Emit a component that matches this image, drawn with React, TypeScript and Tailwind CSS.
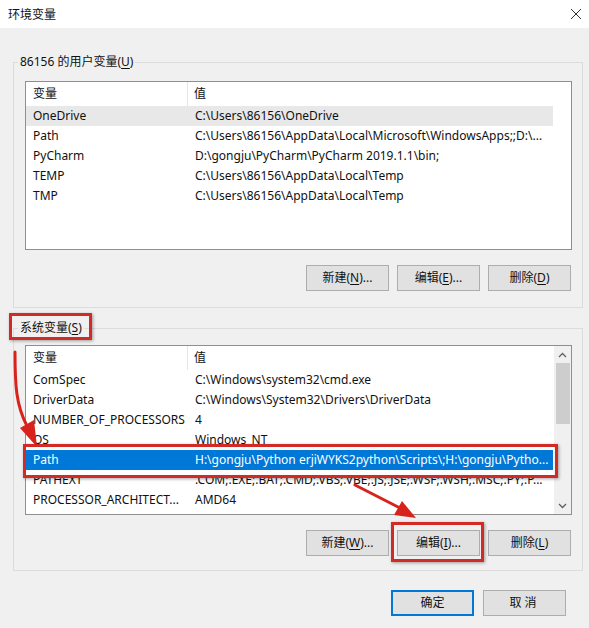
import React from "react";

type Row = { n: string; v: string; sel?: boolean; hover?: boolean };

const userRows: Row[] = [
  { n: "OneDrive", v: "C:\\Users\\86156\\OneDrive", hover: true },
  { n: "Path", v: "C:\\Users\\86156\\AppData\\Local\\Microsoft\\WindowsApps;;D:\\..." },
  { n: "PyCharm", v: "D:\\gongju\\PyCharm\\PyCharm 2019.1.1\\bin;" },
  { n: "TEMP", v: "C:\\Users\\86156\\AppData\\Local\\Temp" },
  { n: "TMP", v: "C:\\Users\\86156\\AppData\\Local\\Temp" },
];

const sysRows: Row[] = [
  { n: "ComSpec", v: "C:\\Windows\\system32\\cmd.exe" },
  { n: "DriverData", v: "C:\\Windows\\System32\\Drivers\\DriverData" },
  { n: "NUMBER_OF_PROCESSORS", v: "4" },
  { n: "OS", v: "Windows_NT" },
  { n: "Path", v: "H:\\gongju\\Python erjiWYKS2python\\Scripts\\;H:\\gongju\\Pytho...", sel: true },
  { n: "PATHEXT", v: ".COM;.EXE;.BAT;.CMD;.VBS;.VBE;.JS;.JSE;.WSF;.WSH;.MSC;.PY;.P..." },
  { n: "PROCESSOR_ARCHITECT...", v: "AMD64" },
];

function ListRows({ rows }: { rows: Row[] }) {
  return (
    <div className="w-[527px] flex flex-col">
      <div className="h-[24px] flex items-center">
        <div className="w-[162px] h-full pl-[7px] flex items-center border-r border-[#e5e5e5]">变量</div>
        <div className="pl-[6px]">值</div>
      </div>
      {rows.map((r) => (
        <div
          key={r.n}
          className={
            "h-[20px] flex items-center whitespace-nowrap " +
            (r.sel ? "bg-[#0078d7] text-white" : r.hover ? "bg-[#e8e8e8]" : "")
          }
        >
          <div className="w-[162px] shrink-0 pl-[7px]">{r.n}</div>
          <div className="pl-[7px]">{r.v}</div>
        </div>
      ))}
    </div>
  );
}

function Btn({ children, def }: { children: React.ReactNode; def?: boolean }) {
  return (
    <div
      className={
        "w-[83px] h-[26px] flex items-center justify-center bg-[#e1e1e1] border " +
        (def ? "border-[#0078d7] shadow-[inset_0_0_0_1px_#0078d7]" : "border-[#adadad]")
      }
    >
      {children}
    </div>
  );
}

function U({ c }: { c: string }) {
  return <span className="underline underline-offset-2">{c}</span>;
}

function Chevron({ up }: { up?: boolean }) {
  return (
    <svg width="9" height="6" viewBox="0 0 9 6">
      <path
        d={up ? "M1 5 L4.5 1.5 L8 5" : "M1 1 L4.5 4.5 L8 1"}
        fill="none"
        stroke="#606060"
        strokeWidth="1.3"
      />
    </svg>
  );
}

export default function App() {
  return (
    <div className="w-[589px] h-[628px] bg-[#f0f0f0] relative overflow-hidden text-[12px] leading-[16px] text-[#111] font-['Noto_Sans','Noto_Sans_CJK_SC',sans-serif]">
      {/* title bar */}
      <div className="h-[28px] bg-white flex items-center justify-between pl-[8px] pr-[4px]">
        <span className="font-['Noto_Sans_CJK_SC',sans-serif]">环境变量</span>
        <svg width="12" height="12" viewBox="0 0 12 12" className="mr-[3px]">
          <path d="M1 1 L11 11 M11 1 L1 11" stroke="#333" strokeWidth="1" />
        </svg>
      </div>

      <div className="pl-[13px] pr-[6px]">
        {/* user vars */}
        <fieldset className="mt-[26px] border border-[#dcdcdc] pl-[11px] pr-[10px] pt-[11px] pb-[16px]">
          <legend className="ml-[-7px] px-[2px] leading-[16px]">
            86156 的用户变量(<U c="U" />)
          </legend>
          <div className="h-[169px] bg-white border border-[#8f8f8f] overflow-hidden">
            <ListRows rows={userRows} />
          </div>
          <div className="mt-[15px] flex justify-end gap-[8px] pr-[1px]">
            <Btn>新建(<U c="N" />)...</Btn>
            <Btn>编辑(<U c="E" />)...</Btn>
            <Btn>删除(<U c="D" />)</Btn>
          </div>
        </fieldset>

        {/* system vars */}
        <fieldset className="mt-[12px] border border-[#dcdcdc] pl-[11px] pr-[10px] pt-[9px] pb-[14px]">
          <legend className="ml-[-7px] px-[2px] leading-[16px]">
            <span className="relative">
              系统变量(<U c="S" />)
              <span className="absolute left-[-11px] right-[-10px] top-[-6px] bottom-[-4px] border-[3px] border-[#d42a25] shadow-[1px_1px_3px_rgba(0,0,0,0.35)]" />
            </span>
          </legend>
          <div className="h-[170px] bg-white border border-[#8f8f8f] overflow-hidden flex">
            <div className="w-[527px] overflow-hidden">
              <ListRows rows={sysRows} />
            </div>
            <div className="w-[17px] h-full ml-auto bg-[#f0f0f0] flex flex-col items-center">
              <div className="h-[17px] w-full flex items-center justify-center">
                <Chevron up />
              </div>
              <div className="w-[14px] h-[61px] bg-[#cdcdcd]" />
              <div className="flex-1" />
              <div className="h-[17px] w-full flex items-center justify-center">
                <Chevron />
              </div>
            </div>
          </div>
          <div className="mt-[15px] flex justify-end gap-[8px] pr-[1px]">
            <Btn>新建(<U c="W" />)...</Btn>
            <Btn>编辑(<U c="I" />)...</Btn>
            <Btn>删除(<U c="L" />)</Btn>
          </div>
        </fieldset>

        <div className="mt-[19px] flex justify-end gap-[9px] pr-[17px]">
          <Btn def>确定</Btn>
          <Btn>
            <span className="tracking-[3px]">取消</span>
          </Btn>
        </div>
      </div>

      {/* annotation red boxes */}
      <div className="absolute left-[23px] top-[444px] w-[535px] h-[34px] border-[3px] border-[#d42a25] shadow-[1px_1px_3px_rgba(0,0,0,0.35)]" />
      <div className="absolute left-[391px] top-[522px] w-[93px] h-[40px] border-[3px] border-[#d42a25] shadow-[1px_1px_3px_rgba(0,0,0,0.35)]" />

      {/* arrows */}
      <svg className="absolute left-0 top-0 pointer-events-none" width="589" height="628">
        <path d="M15 352 C15 385 16 405 27 426" fill="none" stroke="#d8231c" strokeWidth="3" strokeLinecap="round" />
        <polygon points="37,447 20,428 34,420" fill="#d8231c" />
        <path d="M355 485 L400 508" fill="none" stroke="#d8231c" strokeWidth="3" strokeLinecap="round" />
        <polygon points="416,518 394,515 402,501" fill="#d8231c" />
      </svg>
    </div>
  );
}
